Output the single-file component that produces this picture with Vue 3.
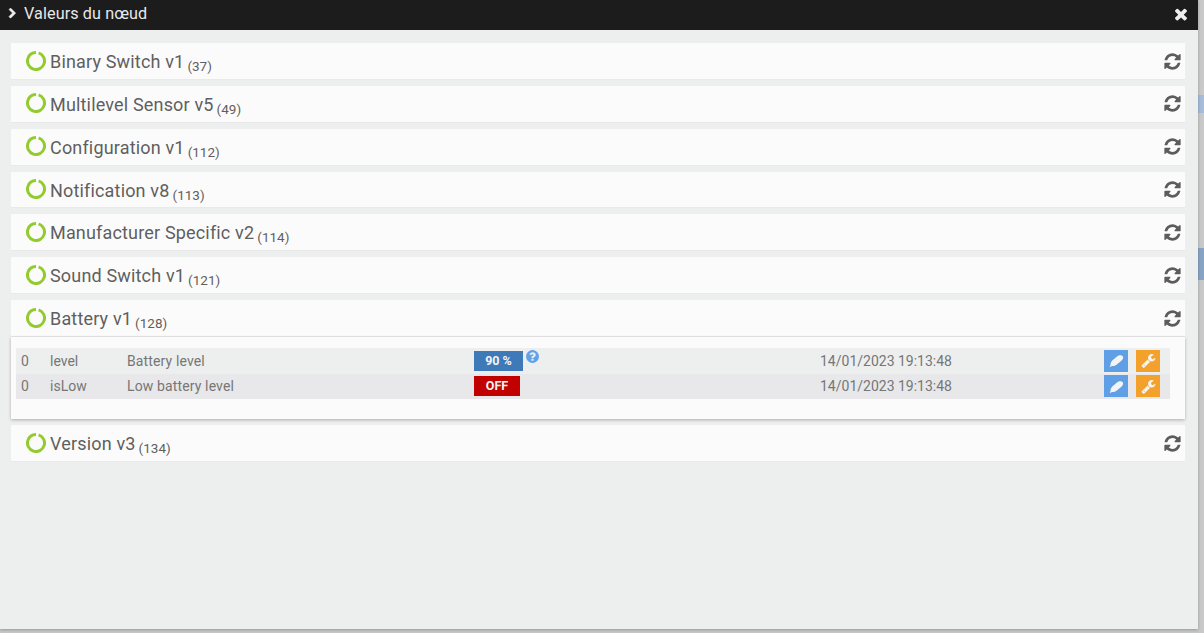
<script setup>
const refreshPath = 'M1639 1056q0 5-1 7-64 268-268 434.5t-478 166.5q-146 0-282.5-55t-243.5-157l-129 129q-19 19-45 19t-45-19-19-45v-448q0-26 19-45t45-19h448q26 0 45 19t19 45-19 45l-137 137q71 66 161 102t187 36q134 0 250-65t186-179q11-17 53-117 8-23 30-23h192q13 0 22.5 9.5t9.5 22.5zm25-800v448q0 26-19 45t-45 19h-448q-26 0-45-19t-19-45 19-45l138-138q-148-137-349-137-134 0-250 65t-186 179q-11 17-53 117-8 23-30 23h-199q-13 0-22.5-9.5t-9.5-22.5v-7q65-268 270-434.5t480-166.5q146 0 284 55.5t245 156.5l130-129q19-19 45-19t45 19 19 45z'
const wrenchPath = 'M448 1472q0-26-19-45t-45-19-45 19-19 45 19 45 45 19 45-19 19-45zm644-420l-682 682q-37 37-90 37-52 0-91-37l-106-108q-38-36-38-90 0-53 38-91l681-681q39 98 114.5 173.5t173.5 114.5zm634-435q0 39-23 106-47 134-164.5 217.5t-258.5 83.5q-185 0-316.5-131.5t-131.5-316.5 131.5-316.5 316.5-131.5q58 0 121.5 16.5t107.5 46.5q16 11 16 28t-16 28l-293 169v224l193 107q5-3 79-48.5t135.5-81 70.5-35.5q15 0 23.5 10t8.5 25z'

const classes = [
  { name: 'Binary Switch v1', id: 37 },
  { name: 'Multilevel Sensor v5', id: 49 },
  { name: 'Configuration v1', id: 112 },
  { name: 'Notification v8', id: 113 },
  { name: 'Manufacturer Specific v2', id: 114 },
  { name: 'Sound Switch v1', id: 121 },
  {
    name: 'Battery v1',
    id: 128,
    values: [
      { instance: 0, key: 'level', label: 'Battery level', value: '90 %', kind: 'info', help: true, date: '14/01/2023 19:13:48' },
      { instance: 0, key: 'isLow', label: 'Low battery level', value: 'OFF', kind: 'off', help: false, date: '14/01/2023 19:13:48' },
    ],
  },
  { name: 'Version v3', id: 134 },
]
</script>

<template>
  <div class="page">
    <span class="behind behind-a"></span>
    <span class="behind behind-b"></span>

    <div class="modal">
      <header class="titlebar">
        <svg class="chevron" viewBox="0 0 1792 1792"><path d="M1363 877l-742 742q-19 19-45 19t-45-19l-166-166q-19-19-19-45t19-45l531-531-531-531q-19-19-19-45t19-45l166-166q19-19 45-19t45 19l742 742q19 19 19 45t-19 45z" /></svg>
        <span class="title">Valeurs du nœud</span>
        <svg class="close" viewBox="0 0 1792 1792"><path d="M1490 1322q0 40-28 68l-136 136q-28 28-68 28t-68-28l-294-294-294 294q-28 28-68 28t-68-28l-136-136q-28-28-28-68t28-68l294-294-294-294q-28-28-28-68t28-68l136-136q28-28 68-28t68 28l294 294 294-294q28-28 68-28t68 28l136 136q28 28 28 68t-28 68l-294 294 294 294q28 28 28 68z" /></svg>
      </header>

      <div class="content">
        <section v-for="item in classes" :key="item.id" class="panel">
          <div class="panel-heading">
            <svg class="ring" viewBox="0 0 20 20">
              <circle cx="10" cy="10" r="8.5" transform="rotate(-72 10 10)" pathLength="100" stroke-dasharray="95 5" />
            </svg>
            <span class="panel-name">{{ item.name }}</span>
            <small class="panel-id">({{ item.id }})</small>
            <svg class="refresh" viewBox="0 0 1792 1792"><path :d="refreshPath" /></svg>
          </div>

          <div v-if="item.values" class="panel-body">
            <div class="values">
              <div v-for="row in item.values" :key="row.key" class="value-row">
                <span>{{ row.instance }}</span>
                <span>{{ row.key }}</span>
                <span class="value-label">{{ row.label }}</span>
                <span class="value-cell">
                  <b class="badge" :class="row.kind">{{ row.value }}</b>
                  <svg v-if="row.help" class="help" viewBox="0 0 1792 1792"><path d="M1024 1376v-192q0-14-9-23t-23-9h-192q-14 0-23 9t-9 23v192q0 14 9 23t23 9h192q14 0 23-9t9-23zm256-672q0-88-55.5-163t-138.5-116-170-41q-243 0-371 213-15 24 8 42l132 100q7 6 19 6 16 0 25-12 53-68 86-92 34-24 86-24 48 0 85.5 26t37.5 59q0 38-20 61t-68 45q-63 28-115.5 86.5t-52.5 125.5v36q0 14 9 23t23 9h192q14 0 23-9t9-23q0-19 21.5-49.5t54.5-49.5q32-18 49-28.5t46-35 44.5-48 28-60.5 12.5-81zm384 192q0 209-103 385.5t-279.5 279.5-385.5 103-385.5-103-279.5-279.5-103-385.5 103-385.5 279.5-279.5 385.5-103 385.5 103 279.5 279.5 103 385.5z" /></svg>
                </span>
                <span>{{ row.date }}</span>
                <span class="actions">
                  <button class="btn btn-blue" type="button">
                    <svg viewBox="0 0 16 16"><path d="M8.500 3.800C10.300 2.200 13.300 1.900 14.500 3.200c1.100 1.300.6 3.300-1 4.700L8 12.500c-1.500 1.200-3.400 1.500-5 1.300L1.500 14.800.8 14l.9-1.300c-.2-1.700.6-3.500 1.800-4.700z" /></svg>
                  </button>
                  <button class="btn btn-orange" type="button">
                    <svg viewBox="0 0 1792 1792"><path :d="wrenchPath" /></svg>
                  </button>
                </span>
              </div>
            </div>
          </div>
        </section>
      </div>
    </div>
  </div>
</template>

<style>
html,
body {
  margin: 0;
  overflow: hidden;
}
</style>

<style scoped>
.page {
  position: relative;
  width: 1204px;
  height: 633px;
  overflow: hidden;
  background: #c9c9c9;
  font-family: Roboto, "Liberation Sans", sans-serif;
}

.behind {
  position: absolute;
  left: 1198px;
  width: 6px;
}

.behind-a {
  top: 95px;
  height: 18px;
  background: #a6bcd8;
}

.behind-b {
  top: 248px;
  height: 32px;
  background: #88a4c4;
}

.modal {
  position: relative;
  width: 1198px;
  height: 629px;
  background: #edefee;
  box-shadow: 0 1px 3px rgba(0, 0, 0, 0.25);
}

.titlebar {
  display: flex;
  align-items: center;
  height: 30px;
  padding: 0 8px 3px 7px;
  box-sizing: border-box;
  background: #1c1c1c;
  color: #e8e8e8;
}

.chevron {
  width: 11px;
  height: 11px;
  fill: #eee;
  stroke: #eee;
  stroke-width: 90;
}

.title {
  margin-left: 6px;
  font-size: 16.2px;
  font-weight: 400;
  letter-spacing: 0.1px;
}

.close {
  width: 18px;
  height: 18px;
  margin-left: auto;
  fill: #eee;
}

.content {
  display: flex;
  flex-direction: column;
  gap: 6px;
  padding: 13px 13px 0 11px;
}

.panel {
  background: #fbfbfb;
}

.panel-heading {
  display: flex;
  align-items: baseline;
  height: 36.86px;
  padding-left: 15px;
  box-sizing: border-box;
  border-bottom: 1px solid #e9e9e9;
  color: #5f5f5f;
  line-height: 37px;
}

.ring {
  align-self: flex-start;
  flex: none;
  width: 20px;
  height: 20px;
  margin-top: 7.5px;
  fill: none;
  stroke: #93cb2e;
  stroke-width: 3;
}

.panel-name {
  margin-left: 4px;
  font-size: 18px;
  letter-spacing: 0.17px;
}

.panel-id {
  margin-left: 3px;
  font-size: 13.5px;
  position: relative;
  top: 3px;
}

.refresh {
  align-self: flex-start;
  flex: none;
  width: 19px;
  height: 19px;
  margin: 8.5px 3.5px 0 auto;
  fill: #5c5c5c;
}

.panel-body {
  padding: 11px 15px 20px 5px;
  box-shadow: 0 1px 3px rgba(0, 0, 0, 0.28);
}

.value-row {
  display: grid;
  grid-template-columns: 29px 77px 347px 346px 284px 1fr;
  align-items: center;
  height: 25.5px;
  padding-left: 5px;
  background: #edefef;
  color: #767676;
  font-size: 14px;
}

.value-row + .value-row {
  background: #e8e8ea;
}

.value-label {
  letter-spacing: 0.13px;
}

.value-cell {
  display: flex;
  align-items: center;
}

.badge {
  display: inline-block;
  height: 20px;
  color: #f4f4f4;
  font-size: 12.5px;
  font-weight: 700;
  line-height: 20px;
  text-align: center;
}

.badge.info {
  width: 49px;
  background: #3e7ab8;
}

.badge.off {
  width: 46px;
  background: #c10000;
}

.help {
  width: 15px;
  height: 15px;
  margin: -8px 0 0 2px;
  fill: #63a1e9;
}

.actions {
  display: flex;
  gap: 8px;
}

.btn {
  display: flex;
  align-items: center;
  justify-content: center;
  width: 24px;
  height: 22px;
  padding: 0;
  border: 0;
}

.btn svg {
  width: 15px;
  height: 15px;
  fill: #f4f4f4;
}

.btn-blue {
  background: #5f9fe6;
}

.btn-orange {
  background: #f4a12c;
}
</style>
